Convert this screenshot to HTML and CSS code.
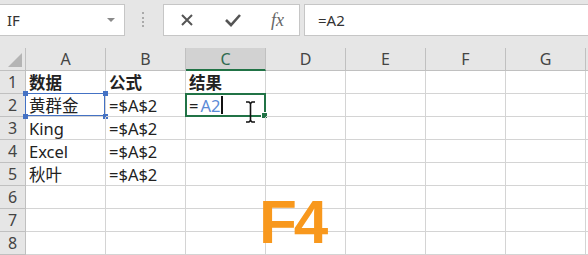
FILE: index.html
```html
<!DOCTYPE html>
<html lang="zh-CN">
<head>
    <meta charset="UTF-8">
    <title>Excel F4</title>
    <link rel="stylesheet" href="styles.css">
</head>
<body>
    <div class="toolbar">
        <div class="name-box">
            <span>IF</span>
            <span class="arrow"></span>
        </div>
        <div class="grip"></div>
        <div class="fx-box">
            <svg width="14" height="14" viewBox="0 0 14 14"><path d="M2 2 L12 12 M12 2 L2 12" stroke="#555" stroke-width="2"/></svg>
            <svg width="16" height="14" viewBox="0 0 16 14"><path d="M1 7 L6 12 L15 2" stroke="#555" stroke-width="2.6" fill="none"/></svg>
            <span class="fx">fx</span>
        </div>
        <div class="formula-box">=A2</div>
    </div>

    <div class="sheet">
        <div class="corner"></div>
        <div class="col-head">A</div>
        <div class="col-head">B</div>
        <div class="col-head active">C</div>
        <div class="col-head">D</div>
        <div class="col-head">E</div>
        <div class="col-head">F</div>
        <div class="col-head">G</div>
        <div class="col-head"></div>

        <div class="row-head">1</div>
        <div class="cell bold">数据</div>
        <div class="cell bold">公式</div>
        <div class="cell bold">结果</div>
        <div class="cell"></div><div class="cell"></div><div class="cell"></div><div class="cell"></div><div class="cell"></div>

        <div class="row-head">2</div>
        <div class="cell ref">黄群金<i class="sq tl"></i><i class="sq tr"></i><i class="sq bl"></i><i class="sq br"></i></div>
        <div class="cell">=$A$2</div>
        <div class="cell editing"><span class="eq">=</span><span class="blue">A2</span><span class="caret"></span><i class="handle"></i></div>
        <div class="cell"></div><div class="cell"></div><div class="cell"></div><div class="cell"></div><div class="cell"></div>

        <div class="row-head">3</div>
        <div class="cell">King</div>
        <div class="cell">=$A$2</div>
        <div class="cell"></div><div class="cell"></div><div class="cell"></div><div class="cell"></div><div class="cell"></div><div class="cell"></div>

        <div class="row-head">4</div>
        <div class="cell">Excel</div>
        <div class="cell">=$A$2</div>
        <div class="cell"></div><div class="cell"></div><div class="cell"></div><div class="cell"></div><div class="cell"></div><div class="cell"></div>

        <div class="row-head">5</div>
        <div class="cell">秋叶</div>
        <div class="cell">=$A$2</div>
        <div class="cell"></div><div class="cell"></div><div class="cell"></div><div class="cell"></div><div class="cell"></div><div class="cell"></div>

        <div class="row-head">6</div>
        <div class="cell"></div><div class="cell"></div><div class="cell"></div><div class="cell"></div><div class="cell"></div><div class="cell"></div><div class="cell"></div><div class="cell"></div>

        <div class="row-head">7</div>
        <div class="cell"></div><div class="cell"></div><div class="cell"></div><div class="cell"></div><div class="cell"></div><div class="cell"></div><div class="cell"></div><div class="cell"></div>

        <div class="row-head">8</div>
        <div class="cell"></div><div class="cell"></div><div class="cell"></div><div class="cell"></div><div class="cell"></div><div class="cell"></div><div class="cell"></div><div class="cell"></div>

        <svg class="ibeam" width="11" height="22" viewBox="0 0 11 22"><path d="M1 1 H4 L5.5 2.5 L7 1 H10 M5.5 2.5 V19.5 M1 21 H4 L5.5 19.5 L7 21 H10" stroke="#111" stroke-width="1.6" fill="none"/></svg>
        <div class="key">F4</div>
    </div>
</body>
</html>
```

FILE: styles.css
```css
body {
    margin: 0;
    width: 588px;
    height: 255px;
    overflow: hidden;
    background-color: #fff;
    font-family: "Noto Sans", "Noto Sans CJK SC", sans-serif;
    color: #222;
}

.toolbar {
    display: flex;
    align-items: flex-start;
    height: 48px;
    padding-top: 4px;
    box-sizing: border-box;
    background-color: #e6e6e6;
}

.name-box,
.fx-box,
.formula-box {
    height: 32px;
    box-sizing: border-box;
    background-color: #fff;
    border: 1px solid #c6c6c6;
    display: flex;
    align-items: center;
}

.name-box {
    width: 126px;
    margin-left: -1px;
    padding: 0 9px 0 7px;
    justify-content: space-between;
    font-size: 15px;
    color: #333;
}

.name-box .arrow {
    width: 0;
    height: 0;
    border-left: 4px solid transparent;
    border-right: 4px solid transparent;
    border-top: 4px solid #8a8a8a;
}

.grip {
    width: 38px;
    height: 16px;
    margin-top: 8px;
    position: relative;
}

.grip::before {
    content: '';
    position: absolute;
    left: 17px;
    top: 0;
    height: 15px;
    border-left: 2px dotted #aaa;
}

.fx-box {
    width: 137px;
    padding: 0 15px 0 16px;
    justify-content: space-between;
}

.fx {
    font-family: "Liberation Serif", serif;
    font-style: italic;
    font-size: 18px;
    color: #666;
}

.formula-box {
    flex: 1;
    margin-left: 4px;
    margin-right: -2px;
    padding-left: 13px;
    font-size: 15px;
    color: #333;
}

.sheet {
    position: relative;
    display: grid;
    grid-template-columns: 26px repeat(7, 80px) 1fr;
    grid-template-rows: repeat(9, 23px);
}

.corner,
.col-head,
.row-head,
.cell {
    box-sizing: border-box;
    border-right: 1px solid #d4d4d4;
    border-bottom: 1px solid #d4d4d4;
}

.corner {
    background-color: #e6e6e6;
    border-color: #c0c0c0;
    position: relative;
}

.corner::after {
    content: '';
    position: absolute;
    right: 3px;
    bottom: 3px;
    border-left: 14px solid transparent;
    border-bottom: 14px solid #b4b4b4;
}

.col-head,
.row-head {
    background-color: #e6e6e6;
    border-color: #c0c0c0;
    color: #444;
    font-size: 16px;
    display: flex;
    justify-content: center;
    align-items: center;
}

.col-head.active {
    background-color: #d2d2d2;
    color: #2f6b50;
    border-bottom: 2px solid #217346;
}

.cell {
    position: relative;
    display: flex;
    align-items: center;
    padding-left: 3px;
    font-size: 16.5px;
    white-space: nowrap;
}

.cell.bold {
    font-weight: bold;
}

.cell.ref::before {
    content: '';
    position: absolute;
    left: -1px;
    top: -1px;
    right: 0;
    bottom: 0;
    border: 1px solid #4472c4;
}

.sq {
    position: absolute;
    width: 5px;
    height: 5px;
    background-color: #4472c4;
}

.sq.tl { left: -3px; top: -3px; }
.sq.tr { right: -3px; top: -3px; }
.sq.bl { left: -3px; bottom: -3px; }
.sq.br { right: -3px; bottom: -3px; }

.cell.editing::before {
    content: '';
    position: absolute;
    left: -1px;
    top: -1px;
    right: -1px;
    bottom: -1px;
    border: 2px solid #217346;
}

.eq {
    margin-right: 2px;
}

.blue {
    color: #5a8ad6;
}

.caret {
    width: 2px;
    height: 18px;
    margin-left: 1px;
    background-color: #111;
}

.handle {
    position: absolute;
    right: -3px;
    bottom: -3px;
    width: 5px;
    height: 5px;
    background-color: #217346;
    border: 1px solid #fff;
}

.ibeam {
    position: absolute;
    left: 245px;
    top: 53px;
}

.key {
    position: absolute;
    left: 259px;
    top: 143px;
    font-family: "Liberation Sans", Arial, sans-serif;
    font-weight: bold;
    font-size: 62px;
    letter-spacing: -3px;
    line-height: 1;
    color: #f8981d;
}
```
